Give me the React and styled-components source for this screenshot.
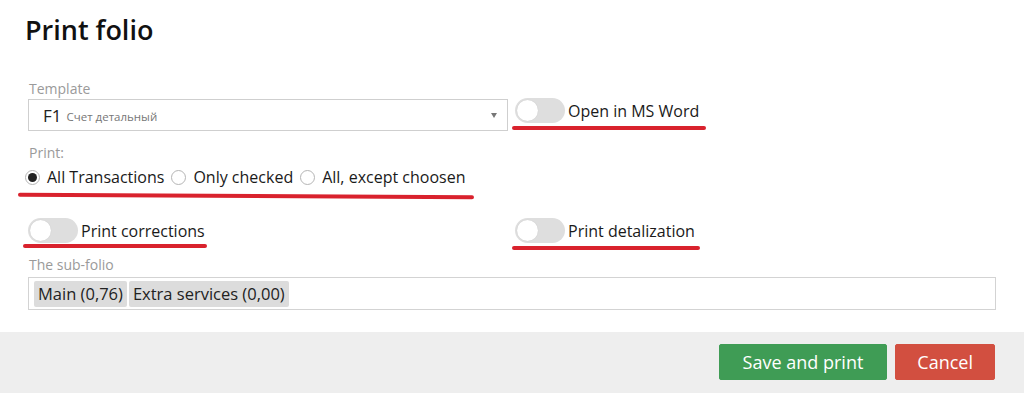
import React from "react";
import styled, { createGlobalStyle } from "styled-components";

const Global = createGlobalStyle`
  html, body {
    margin: 0;
    padding: 0;
    background: #fff;
    font-family: "Open Sans", "Noto Sans", sans-serif;
    color: #222;
  }
`;

// Whole dialog
const Dialog = styled.div`
  width: 1024px;
  height: 393px;
  display: flex;
  flex-direction: column;
  overflow: hidden;
`;

const Body = styled.div`
  padding: 12px 28px 0 28px;
  display: flex;
  flex-direction: column;
`;

const Title = styled.h1`
  margin: 0 0 0 -3px;
  font-size: 27px;
  line-height: 36px;
  font-weight: 600;
  color: #111;
`;

const Label = styled.div`
  margin-top: ${({ $mt }) => $mt}px;
  margin-left: 1px;
  font-size: 14px;
  line-height: 18px;
  color: #9a9a9a;
`;

// two column row: form field on the left, toggle on the right
const Row = styled.div`
  display: grid;
  grid-template-columns: 480px 1fr;
  column-gap: 7px;
  align-items: ${({ $align }) => $align || "center"};
  margin-top: ${({ $mt }) => $mt || 0}px;
`;

const Field = styled.div`
  display: flex;
  flex-direction: column;
`;

const Select = styled.div`
  margin-top: 1px;
  height: 30px;
  border: 1px solid #cfcfcf;
  display: flex;
  align-items: center;
  padding: 0 10px 0 14px;
  gap: 5px;
`;

const SelectValue = styled.span`
  font-size: 17px;
  color: #222;
`;

const SelectHint = styled.span`
  font-size: 11.5px;
  color: #777;
  flex: 1;
  padding-top: 2px;
`;

const Caret = styled.span`
  width: 0;
  height: 0;
  border-left: 3.5px solid transparent;
  border-right: 3.5px solid transparent;
  border-top: 5px solid #777;
`;

// red hand-drawn underline, lies over the content
const Marked = styled.div`
  position: relative;
  display: inline-flex;
  align-items: center;
  justify-self: start;
  align-self: ${({ $self }) => $self || "auto"};
  margin-bottom: ${({ $mb }) => $mb || 0}px;

  &::after {
    content: "";
    position: absolute;
    left: ${({ $l }) => $l}px;
    right: ${({ $r }) => $r}px;
    bottom: ${({ $b }) => $b}px;
    height: 4px;
    border-radius: 2px;
    background: #d9222d;
    transform: rotate(${({ $rot }) => $rot || 0}deg);
  }
`;

const Toggle = styled.span`
  position: relative;
  width: 50px;
  height: 25px;
  border-radius: 13px;
  background: #dedede;
  flex-shrink: 0;

  &::before {
    content: "";
    position: absolute;
    top: 2px;
    left: 2px;
    width: 21px;
    height: 21px;
    border-radius: 50%;
    background: #fff;
    box-shadow: 0 0 1px rgba(0, 0, 0, 0.15);
  }
`;

const ToggleText = styled.span`
  margin-left: 3px;
  font-size: 16px;
  line-height: 22px;
  color: #1a1a1a;
`;

const Radios = styled.div`
  margin-top: 4px;
  margin-left: -3px;
  display: flex;
  align-items: center;
  gap: 7px;
`;

const RadioItem = styled.label`
  display: inline-flex;
  align-items: center;
  gap: 7px;
  font-size: 16px;
  line-height: 22px;
  color: #1a1a1a;
`;

const RadioDot = styled.span`
  width: 13px;
  height: 13px;
  border-radius: 50%;
  border: 1px solid #b5b5b5;
  display: flex;
  align-items: center;
  justify-content: center;

  &::after {
    content: "";
    width: 9px;
    height: 9px;
    border-radius: 50%;
    background: ${({ $on }) => ($on ? "#222" : "transparent")};
  }
`;

const TagBox = styled.div`
  margin-top: 3px;
  height: 31px;
  border: 1px solid #d3d3d3;
  display: flex;
  align-items: center;
  padding: 0 5px;
  gap: 2px;
`;

const Tag = styled.span`
  height: 26px;
  line-height: 26px;
  padding: 0 4px;
  background: #dcdcdc;
  border-radius: 2px;
  font-size: 16.5px;
  color: #222;
`;

const Footer = styled.div`
  margin-top: auto;
  height: 61px;
  background: #eeeeee;
  display: flex;
  justify-content: flex-end;
  align-items: flex-start;
  padding: 12px 29px 0 0;
  box-sizing: border-box;
  gap: 8px;
`;

const Button = styled.button`
  height: 36px;
  padding: 0 ${({ $px }) => $px}px;
  border: 1px solid ${({ $bg }) => $bg};
  border-radius: 2px;
  background: ${({ $bg }) => $bg};
  color: #fff;
  font-family: inherit;
  font-size: 18px;
  cursor: pointer;
`;

const radios = [
  { label: "All Transactions", on: true },
  { label: "Only checked" },
  { label: "All, except choosen" },
];

export default function App() {
  return (
    <Dialog>
      <Global />
      <Body>
        <Title>Print folio</Title>

        <Row $align="end" $mt={32}>
          <Field>
            <Label>Template</Label>
            <Select>
              <SelectValue>F1</SelectValue>
              <SelectHint>Счет детальный</SelectHint>
              <Caret />
            </Select>
          </Field>
          <Marked $self="end" $mb={8} $l={-3} $r={-7} $b={-7}>
            <Toggle />
            <ToggleText>Open in MS Word</ToggleText>
          </Marked>
        </Row>

        <Label $mt={13}>Print:</Label>
        <div>
          <Marked $l={-10} $r={-9} $b={-10} $rot={0.3}>
            <Radios>
              {radios.map((r) => (
                <RadioItem key={r.label}>
                  <RadioDot $on={r.on} />
                  {r.label}
                </RadioItem>
              ))}
            </Radios>
          </Marked>
        </div>

        <Row $mt={30}>
          <Marked $l={-5} $r={-2} $b={-5}>
            <Toggle />
            <ToggleText>Print corrections</ToggleText>
          </Marked>
          <Marked $l={-3} $r={-5} $b={-7}>
            <Toggle />
            <ToggleText>Print detalization</ToggleText>
          </Marked>
        </Row>

        <Label $mt={13}>The sub-folio</Label>
        <TagBox>
          <Tag>Main (0,76)</Tag>
          <Tag>Extra services (0,00)</Tag>
        </TagBox>
      </Body>

      <Footer>
        <Button $bg="#3f9c55" $px={23}>Save and print</Button>
        <Button $bg="#d24f40" $px={21}>Cancel</Button>
      </Footer>
    </Dialog>
  );
}
